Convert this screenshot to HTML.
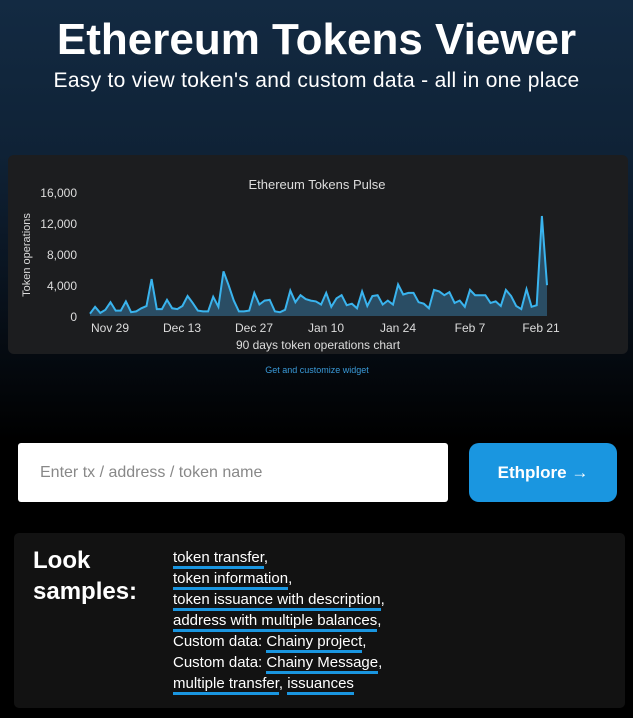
<!DOCTYPE html>
<html><head><meta charset="utf-8"><style>
*{margin:0;padding:0;box-sizing:border-box}
body{width:633px;height:718px;overflow:hidden;background:#000;font-family:"Liberation Sans","DejaVu Sans",sans-serif;position:relative}
.bg{position:absolute;left:0;top:0;width:633px;height:440px;background:linear-gradient(#132a42 0%,#0f2236 35%,#0a1522 60%,#000 100%)}
.t{position:absolute;left:0;width:633px;text-align:center;color:#fff}
.panel{position:absolute;left:8px;top:155px;width:620px;height:199px;background:#1c1d1f;border-radius:6px}
.inp{position:absolute;left:18px;top:443px;width:430px;height:59px;background:#fff;border-radius:3px;color:#888;font-size:16px;padding:0 0 0 22px;line-height:59px}
.btn{position:absolute;left:469px;top:443px;width:148px;height:59px;background:#1a96e0;border-radius:10px;color:#fff;font-weight:bold;font-size:17px;text-align:center;line-height:59px}
.box{position:absolute;left:14px;top:533px;width:611px;height:175px;background:#121212;border-radius:5px}
.look{position:absolute;left:33px;top:545px;color:#fff;font-weight:bold;font-size:24px;line-height:31px}
.links{position:absolute;left:173px;top:547px;color:#fff;font-size:15px;line-height:21px}
.links u{text-decoration:none;border-bottom:3px solid #1a96e0;padding-bottom:0}
</style></head><body>
<div class="bg"></div>
<div class="t" style="top:14px;font-size:44px;font-weight:bold;line-height:52px">Ethereum Tokens Viewer</div>
<div class="t" style="top:68px;font-size:21px;line-height:26px;letter-spacing:0.3px">Easy to view token's and custom data - all in one place</div>
<div class="panel"></div>
<svg style="position:absolute;left:0;top:0" width="633" height="400">
<text x="317" y="189" fill="#ddd" font-size="13" text-anchor="middle" font-family="Liberation Sans,sans-serif">Ethereum Tokens Pulse</text>
<g fill="#ddd" font-size="12" text-anchor="end" font-family="Liberation Sans,sans-serif">
<text x="77" y="197">16,000</text><text x="77" y="228">12,000</text><text x="77" y="259">8,000</text><text x="77" y="290">4,000</text><text x="77" y="321">0</text></g>
<text transform="translate(30,255) rotate(-90)" fill="#ddd" font-size="11" text-anchor="middle" font-family="Liberation Sans,sans-serif">Token operations</text>
<g fill="#ddd" font-size="12" text-anchor="middle" font-family="Liberation Sans,sans-serif">
<text x="110" y="332">Nov 29</text><text x="182" y="332">Dec 13</text><text x="254" y="332">Dec 27</text><text x="326" y="332">Jan 10</text><text x="398" y="332">Jan 24</text><text x="470" y="332">Feb 7</text><text x="541" y="332">Feb 21</text></g>
<text x="318" y="349" fill="#ddd" font-size="12" text-anchor="middle" font-family="Liberation Sans,sans-serif">90 days token operations chart</text>
<path id="area" fill="#2a4d64"/>
<path id="line" fill="none" stroke="#3ab4ee" stroke-width="2"/>
<text x="317" y="373" fill="#3a9ad8" font-size="9" text-anchor="middle" font-family="Liberation Sans,sans-serif">Get and customize widget</text>
</svg>
<script>
var v=[0.3,1.2,0.4,0.8,1.8,0.7,0.7,1.9,0.5,0.6,1.0,1.3,4.8,0.9,0.9,2.1,1.0,0.9,1.3,2.6,1.7,0.7,0.6,0.6,2.5,1.2,5.8,4.0,2.0,0.6,0.6,0.7,3.0,1.5,2.0,2.1,0.6,0.5,0.8,3.3,1.8,2.7,2.2,2.0,1.9,1.5,3.0,1.2,2.3,2.7,1.4,1.6,1.0,3.2,1.3,2.6,2.7,1.5,2.0,1.5,4.1,2.8,3.0,3.0,1.8,1.6,1.0,3.4,3.2,2.7,3.1,1.7,2.0,1.2,3.4,2.7,2.7,2.7,1.7,1.9,1.3,3.4,2.6,1.3,0.9,3.5,1.2,1.4,13.0,4.0];
var d="";for(var i=0;i<v.length;i++){var x=90+i*(457/(v.length-1)),y=316-v[i]*7.69;d+=(i?"L":"M")+x.toFixed(1)+" "+y.toFixed(1);}
document.getElementById("line").setAttribute("d",d);
document.getElementById("area").setAttribute("d",d+"L547 316L90 316Z");
</script>
<div class="inp">Enter tx / address / token name</div>
<div class="btn">Ethplore →</div>
<div class="box"></div>
<div class="look">Look<br>samples:</div>
<div class="links"><u>token transfer</u>,<br><u>token information</u>,<br><u>token issuance with description</u>,<br><u>address with multiple balances</u>,<br>Custom data: <u>Chainy project</u>,<br>Custom data: <u>Chainy Message</u>,<br><u>multiple transfer</u>, <u>issuances</u></div>
</body></html>
